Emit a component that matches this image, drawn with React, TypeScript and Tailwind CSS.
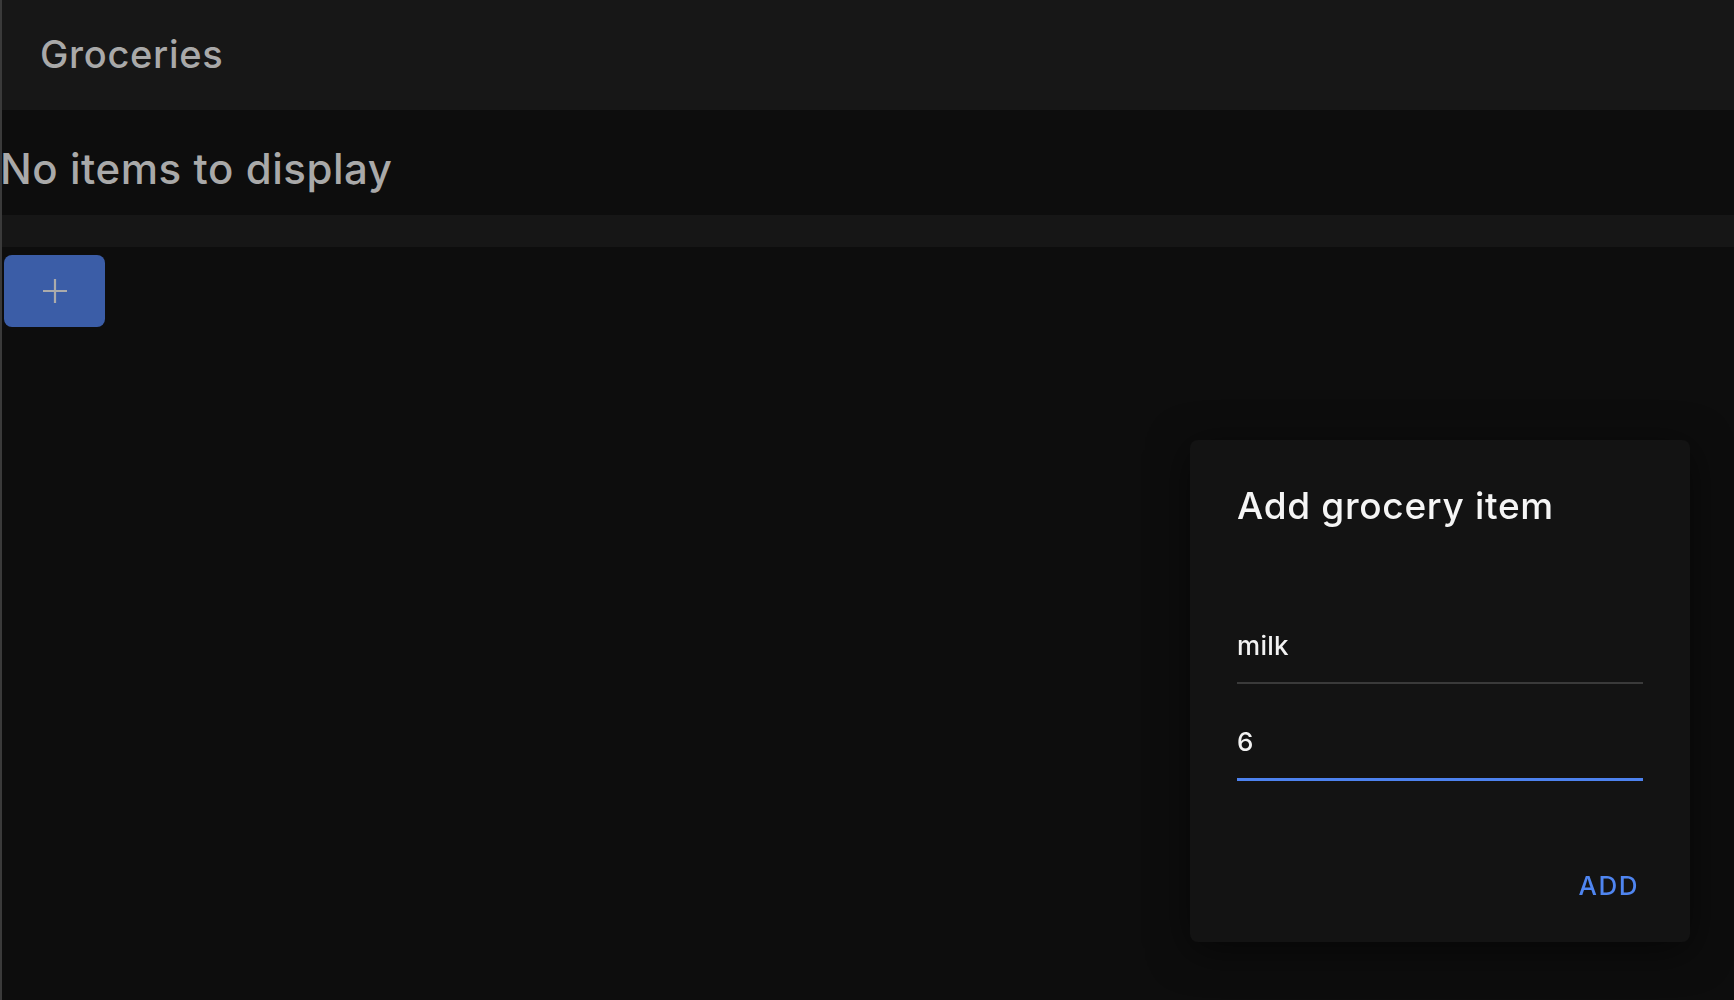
import React from 'react';

const font = { fontFamily: 'Inter, "Liberation Sans", Arial, sans-serif' };

export default function App() {
  return (
    <div className="min-h-[1000px] bg-[#0d0d0d] border-l-2 border-[#3a3a3a] font-medium" style={font}>
      {/* Header */}
      <header className="h-[110px] bg-[#171717] pl-[38px] pt-[35px]">
        <h1 className="text-[38px] leading-none tracking-[0.7px] text-[#a9a9a9]">Groceries</h1>
      </header>

      {/* List */}
      <div className="h-[105px] pt-[38px] -ml-[2px]">
        <p className="text-[42px] leading-none tracking-[0.55px] text-[#a9a9a9]">No items to display</p>
      </div>
      <div className="h-[32px] bg-[#161616]" />

      <button className="mt-[8px] ml-[2px] w-[101px] h-[72px] rounded-lg bg-[#3b5da7] flex items-center justify-center">
        <svg width="26" height="26" viewBox="0 0 26 26" fill="none" stroke="#ababab" strokeWidth="2.2">
          <path d="M13 1v24M1 13h24" />
        </svg>
      </button>

      {/* Dialog */}
      <div className="fixed left-[1190px] top-[440px] w-[500px] h-[502px] rounded-lg bg-[#131313] shadow-[0_8px_40px_rgba(0,0,0,0.55)] px-[47px] pt-[47px]">
        <h2 className="text-[37px] leading-none tracking-[0.7px] text-[#f5f5f5]">Add grocery item</h2>

        <div className="mt-[109px]">
          <div className="text-[26px] leading-none tracking-[0.3px] text-[#f2f2f2]">milk</div>
          <div className="mt-[23px] h-[2px] bg-[#3a3a3a]" />
        </div>

        <div className="mt-[45px]">
          <div className="text-[26px] leading-none text-[#f2f2f2]">6</div>
          <div className="mt-[23px] h-[3px] bg-[#4d82ef]" />
        </div>

        <div className="mt-[92px] flex justify-end">
          <button className="px-1 text-[26px] leading-none tracking-[1.5px] text-[#4f85f0]">ADD</button>
        </div>
      </div>
    </div>
  );
}
